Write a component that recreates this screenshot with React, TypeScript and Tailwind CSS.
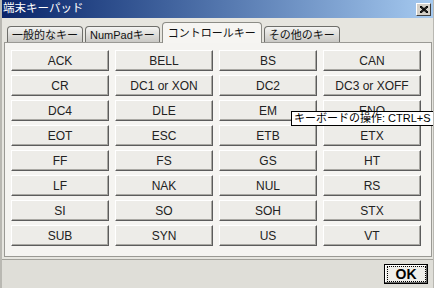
import React from "react";

const KEYS = [
  "ACK", "BELL", "BS", "CAN",
  "CR", "DC1 or XON", "DC2", "DC3 or XOFF",
  "DC4", "DLE", "EM", "ENQ",
  "EOT", "ESC", "ETB", "ETX",
  "FF", "FS", "GS", "HT",
  "LF", "NAK", "NUL", "RS",
  "SI", "SO", "SOH", "STX",
  "SUB", "SYN", "US", "VT",
];

const TABS = ["一般的なキー", "NumPadキー", "コントロールキー", "その他のキー"];
const ACTIVE = 2;

const font = "font-['Liberation_Sans','Noto_Sans_CJK_JP',sans-serif]";

function Tab({ label, active }: { label: string; active: boolean }) {
  if (active) {
    return (
      <div className="relative z-10 -mb-px flex h-[21px] items-center rounded-t-[4px] border border-b-0 border-[#8c8c86] bg-[#f6f5f2] px-[5px] pt-px text-[11px] text-[#111]">
        {label}
      </div>
    );
  }
  return (
    <div className="flex h-[16px] items-center rounded-t-[4px] border border-b-0 border-[#6e6e6a] bg-gradient-to-b from-[#f4f4f2] to-[#c9c8c4] px-[4px] pt-px text-[11px] text-[#111]">
      {label}
    </div>
  );
}

function KeyButton({ label }: { label: string }) {
  return (
    <div className="flex h-[21px] items-center justify-center border border-t-white border-l-white border-b-[#5c5c5c] border-r-[#5c5c5c] bg-[#edece8] text-[12px] text-[#222] shadow-[inset_-1px_-1px_0_#a9a8a3]">
      {label}
    </div>
  );
}

export default function App() {
  return (
    <div className={`relative flex h-[288px] w-[434px] flex-col overflow-hidden border-l-2 border-r border-[#b9b8b2] bg-[#e6e5df] ${font}`}>
      {/* title bar */}
      <div className="flex h-[18px] shrink-0 items-center justify-between bg-gradient-to-r from-[#0a246a] to-[#a6caf0] pl-[1px] pr-[2px]">
        <span className="text-[11.5px] leading-none text-white">端末キーパッド</span>
        <div className="flex h-[13px] w-[15px] items-center justify-center border border-t-white border-l-white border-b-[#404040] border-r-[#404040] bg-[#d4d0c8]">
          <svg width="8" height="7" viewBox="0 0 8 7">
            <path d="M0 0 L8 7 M1 0 L8 6 M0 1 L7 7 M8 0 L0 7 M7 0 L0 6 M8 1 L1 7" stroke="#000" strokeWidth="1" />
          </svg>
        </div>
      </div>

      {/* tabs */}
      <div className="mt-[4px] flex items-end gap-[2px] pl-[5px]">
        {TABS.map((t, i) => (
          <Tab key={t} label={t} active={i === ACTIVE} />
        ))}
      </div>

      {/* panel */}
      <div className="mr-[1px] ml-[2px] h-[215px] border border-[#9a9994] bg-[#f5f4f1] pt-[7px] pr-[10px] pl-[6px]">
        <div className="grid grid-cols-4 gap-x-[6px] gap-y-[4px]">
          {KEYS.map((k) => (
            <KeyButton key={k} label={k} />
          ))}
        </div>
      </div>

      {/* footer */}
      <div className="mt-[2px] flex flex-1 items-center justify-end border-t border-[#a3a29c] bg-[#dfded8] pr-[5px]">
        <div className="flex h-[20px] w-[44px] items-center justify-center border border-black bg-[#efeeea] shadow-[inset_-1px_-1px_0_#6b6b6b,inset_1px_1px_0_#fff]">
          <span className="border border-dotted border-black px-[8px] text-[14px] font-bold leading-[14px] text-black">OK</span>
        </div>
      </div>

      {/* tooltip */}
      <div className="absolute top-[111px] left-[289px] border border-black bg-white px-[2px] text-[11px] leading-[13px] whitespace-nowrap text-black">
        キーボードの操作: CTRL+S
      </div>
    </div>
  );
}
